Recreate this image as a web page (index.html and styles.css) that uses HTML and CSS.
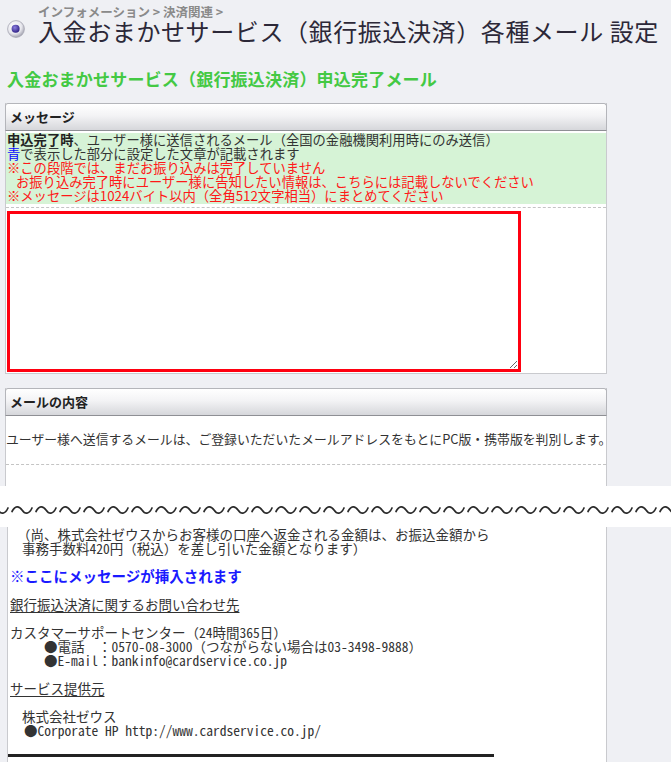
FILE: index.html
```html
<!DOCTYPE html>
<html lang="ja">
<head>
  <meta charset="UTF-8">
  <title>入金おまかせサービス（銀行振込決済）各種メール 設定</title>
  <link rel="stylesheet" href="styles.css">
</head>
<body>

<div class="page-head">
  <svg class="head-icon" width="18" height="18" viewBox="0 0 18 18">
    <defs>
      <radialGradient id="ring" cx="40%" cy="35%" r="70%">
        <stop offset="0" stop-color="#ffffff"/>
        <stop offset="0.6" stop-color="#e8e8ee"/>
        <stop offset="1" stop-color="#9a9aa8"/>
      </radialGradient>
      <radialGradient id="dot" cx="40%" cy="35%" r="70%">
        <stop offset="0" stop-color="#8d7fe0"/>
        <stop offset="1" stop-color="#2a1c80"/>
      </radialGradient>
    </defs>
    <circle cx="9" cy="9" r="8.4" fill="url(#ring)" stroke="#a6a6b2" stroke-width="0.8"/>
    <circle cx="8.6" cy="8.8" r="4" fill="url(#dot)"/>
  </svg>
  <div>
    <div class="crumb">インフォメーション &gt; 決済関連 &gt;</div>
    <h1>入金おまかせサービス（銀行振込決済）各種メール 設定</h1>
  </div>
</div>

<h2 class="mail-title">入金おまかせサービス（銀行振込決済）申込完了メール</h2>

<section class="panel">
  <div class="panel-head">メッセージ</div>
  <div class="note">
    <b>申込完了時</b>、ユーザー様に送信されるメール（全国の金融機関利用時にのみ送信）<br>
    <span class="blue">青</span>で表示した部分に設定した文章が記載されます<br>
    <span class="red">※この段階では、まだお振り込みは完了していません<br>
    <span class="indent">お振り込み完了時にユーザー様に告知したい情報は、こちらには記載しないでください</span><br>
    ※メッセージは1024バイト以内（全角512文字相当）にまとめてください</span>
  </div>
  <div class="sep"></div>
  <textarea class="msg-input"></textarea>
</section>

<section class="panel panel-open">
  <div class="panel-head">メールの内容</div>
  <p class="lead">ユーザー様へ送信するメールは、ご登録いただいたメールアドレスをもとにPC版・携帯版を判別します。</p>
  <div class="sep"></div>
</section>

<div class="cut">
  <svg width="671" height="14" viewBox="0 0 671 14">
    <defs>
      <pattern id="wave" x="10" y="0" width="24" height="14" patternUnits="userSpaceOnUse">
        <path d="M2 8.5 C5 2.5, 9 2.5, 12 7 S19 11.5, 22 5" fill="none" stroke="#2a2a2a" stroke-width="1.7" stroke-linecap="round"/>
      </pattern>
    </defs>
    <rect width="671" height="14" fill="url(#wave)"/>
  </svg>
</div>

<section class="panel mail-panel">
  <div class="mail-text">
    <p class="in-1">（尚、株式会社ゼウスからお客様の口座へ返金される金額は、お振込金額から</p>
    <p class="in-2">事務手数料420円（税込）を差し引いた金額となります）</p>
    <p class="gap insert">※ここにメッセージが挿入されます</p>
    <p class="gap"><u>銀行振込決済に関するお問い合わせ先</u></p>
    <p class="gap">カスタマーサポートセンター（24時間365日）</p>
    <p class="in-5">●電話　：0570-08-3000（つながらない場合は03-3498-9888）</p>
    <p class="in-5">●E-mail：bankinfo@cardservice.co.jp</p>
    <p class="gap"><u>サービス提供元</u></p>
    <p class="gap in-2">株式会社ゼウス</p>
    <p class="in-3">●Corporate HP http://www.cardservice.co.jp/</p>
  </div>
  <hr class="mail-end">
</section>

</body>
</html>
```

FILE: styles.css
```css
body {
  margin: 0;
  width: 671px;
  height: 762px;
  overflow: hidden;
  background: #eff0f4;
  color: #333;
  font-family: "Noto Sans CJK JP", sans-serif;
}

.page-head {
  display: flex;
  align-items: flex-start;
  gap: 13px;
  padding: 5px 0 0 7px;
}
.head-icon { margin-top: 15px; }
.crumb {
  margin-top: 1px;
  font-size: 12.5px;
  line-height: 12px;
  font-weight: bold;
  color: #8a8a8a;
}
h1 {
  margin: 0;
  font-size: 24px;
  line-height: 26px;
  font-weight: normal;
  letter-spacing: 0.6px;
  color: #2c2838;
}

.mail-title {
  margin: 25px 0 0 7px;
  font-size: 17px;
  line-height: 20px;
  letter-spacing: 0.2px;
  color: #44c944;
}

.panel {
  margin: 14px 0 0 5px;
  width: 600px;
  background: #fff;
  border: 1px solid #c9cace;
  border-top: 0;
}
.panel-head {
  height: 26px;
  margin: 0 -1px;
  padding-left: 4px;
  border: 1px solid #b4b5ba;
  border-bottom-color: #8e8f94;
  border-radius: 3px 3px 0 0;
  background: linear-gradient(#ffffff, #f3f3f5 45%, #d6d7db);
  font-size: 13px;
  line-height: 26px;
  font-weight: bold;
  color: #222;
}
.note {
  margin-top: 2px;
  padding-left: 1px;
  height: 71px;
  background: #d6f3d6;
  font-size: 13.3px;
  line-height: 14px;
  color: #333;
  white-space: nowrap;
}
.note b { color: #222; }
.blue { color: #0a0aff; }
.red { color: #ff1818; }
.indent { padding-left: 9px; }
.sep {
  margin-top: 3px;
  border-top: 1px dashed #c4c4c4;
}
.msg-input {
  display: block;
  margin: 3px 0 1px 1px;
  width: 514px;
  height: 161px;
  box-sizing: border-box;
  border: 3px solid #ff0010;
  resize: both;
}

.panel-open {
  height: 98px;
  border-bottom: 0;
}
.lead {
  margin: 16px 0 0 0;
  font-size: 12.85px;
  line-height: 14px;
  white-space: nowrap;
  color: #333;
}
.panel-open .sep { margin-top: 18px; }

.cut {
  height: 41px;
  background: #fff;
  padding-top: 17px;
  box-sizing: border-box;
}
.cut svg { display: block; }

.mail-panel {
  margin: 0 0 0 7px;
  width: 598px;
  height: 240px;
  border-bottom: 0;
}
.mail-text {
  padding-left: 2px;
  font-family: "Noto Sans Mono CJK JP", "Noto Sans CJK JP", monospace;
  font-size: 13.5px;
  line-height: 14px;
  color: #333;
  white-space: nowrap;
}
.mail-text p { margin: 0; }
.mail-text .gap { margin-top: 14px; }
.mail-text u { text-underline-offset: 2px; }
.in-1 { padding-left: 7px; }
.in-2 { padding-left: 12px; }
.in-3 { padding-left: 14px; }
.in-5 { padding-left: 34px; }
.insert {
  font-family: "Noto Sans CJK JP", sans-serif;
  font-size: 14.5px;
  font-weight: bold;
  color: #1a1aff;
}
.mail-end {
  margin: 17px 0 0 0;
  width: 486px;
  height: 0;
  border: 0;
  border-top: 3px solid #222;
}
```
